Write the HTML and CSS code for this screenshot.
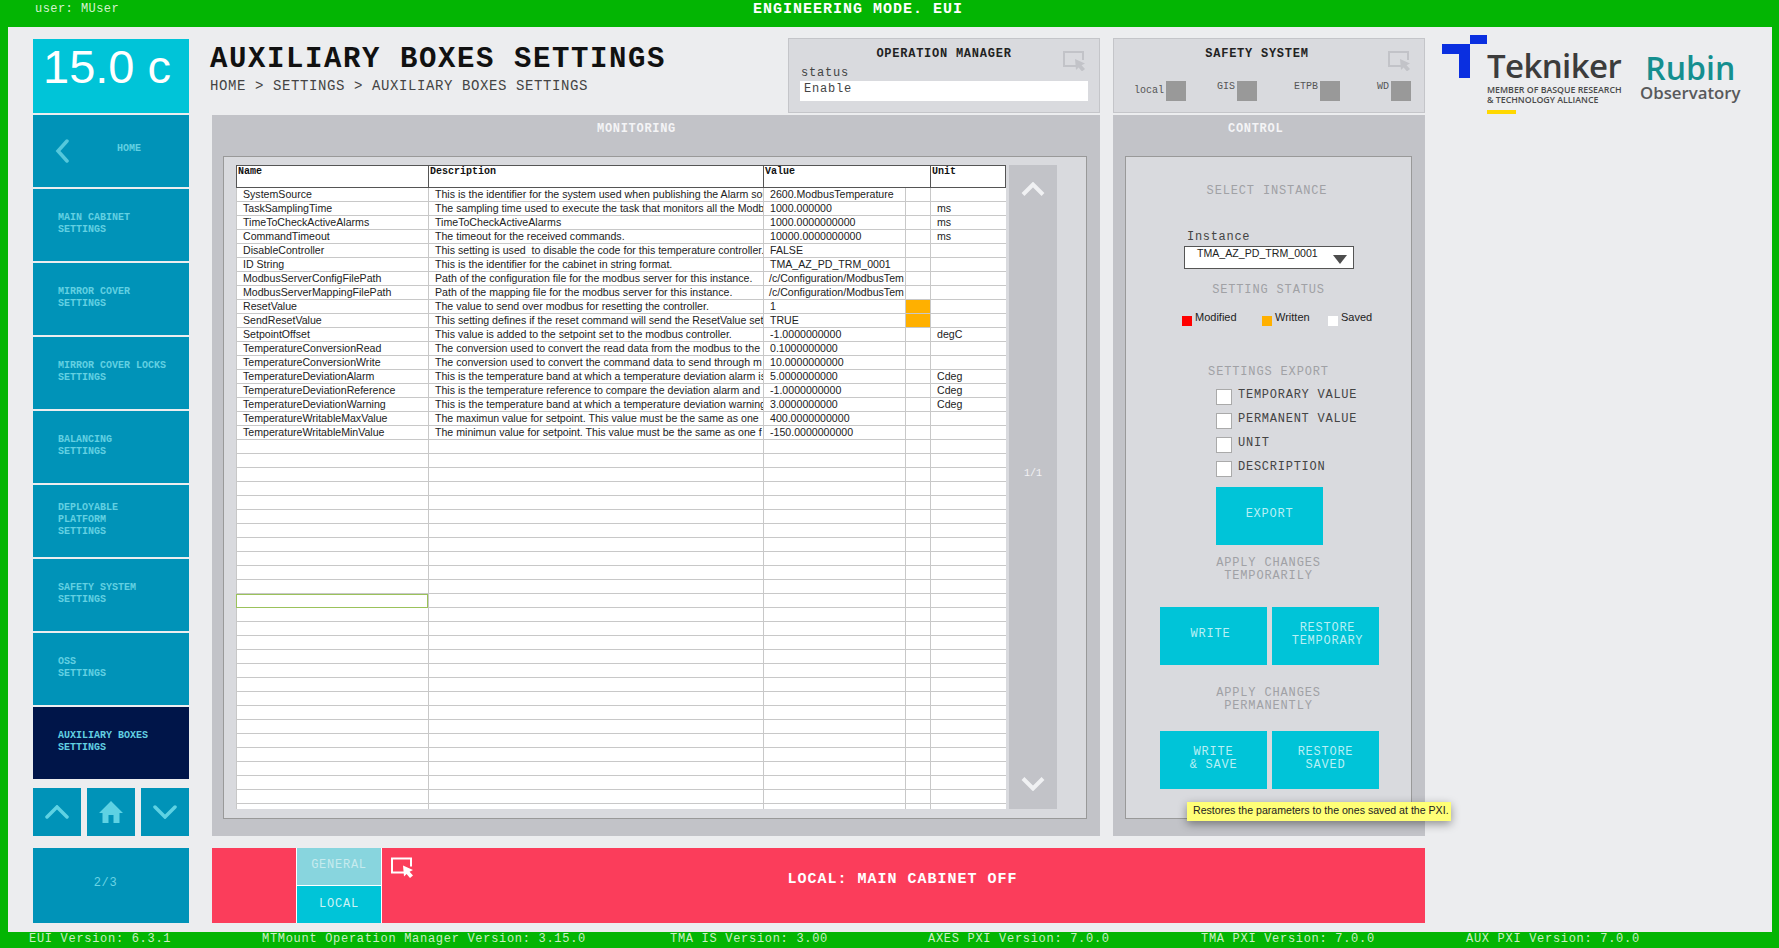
FILE: index.html
```html
<!DOCTYPE html>
<html lang="en">
<head>
	<meta charset="utf-8">
	<title>Auxiliary Boxes Settings</title>
	<link rel="stylesheet" href="styles.css">
</head>
<body>

<svg class="defs">
	<symbol id="pick" viewBox="0 0 24 20">
		<path d="M16 15H1V1H20V9" fill="none" stroke="currentColor" stroke-width="2"/>
		<path d="M12 8L13 19L15.6 16.5L19 20.5L22 18L18.6 14.2L22 12.6Z" fill="currentColor"/>
	</symbol>
</svg>

<div class="topbar">
	<span class="user">user: MUser</span>
	<span class="mode">ENGINEERING MODE. EUI</span>
</div>

<div class="main">

	<div class="leftcol">
		<div class="temp">15.0 c</div>
		<div class="nav">
			<div class="navitem navhome">
				<svg class="back" width="14" height="24" viewBox="0 0 14 24"><path d="M12 2L3 12L12 22" fill="none" stroke="currentColor" stroke-width="3.5" stroke-linecap="round"/></svg>
				<span>HOME</span>
			</div>
			<div class="navitem">MAIN CABINET<br>SETTINGS</div>
			<div class="navitem">MIRROR COVER<br>SETTINGS</div>
			<div class="navitem">MIRROR COVER LOCKS<br>SETTINGS</div>
			<div class="navitem">BALANCING<br>SETTINGS</div>
			<div class="navitem">DEPLOYABLE<br>PLATFORM<br>SETTINGS</div>
			<div class="navitem">SAFETY SYSTEM<br>SETTINGS</div>
			<div class="navitem">OSS<br>SETTINGS</div>
			<div class="navitem active">AUXILIARY BOXES<br>SETTINGS</div>
		</div>
		<div class="pager">
			<div class="pagerbtn"><svg width="24" height="14" viewBox="0 0 24 14"><path d="M2 12L12 2L22 12" fill="none" stroke="currentColor" stroke-width="3.5" stroke-linecap="round"/></svg></div>
			<div class="pagerbtn"><svg width="24" height="22" viewBox="0 0 24 22"><path d="M12 0L24 12H20.500V22H14.500V14H9.500V22H3.500V12H0Z" fill="currentColor"/></svg></div>
			<div class="pagerbtn"><svg width="24" height="14" viewBox="0 0 24 14"><path d="M2 2L12 12L22 2" fill="none" stroke="currentColor" stroke-width="3.5" stroke-linecap="round"/></svg></div>
		</div>
		<div class="pagenum">2/3</div>
	</div>

	<div class="content">

		<div class="head">
			<div class="titleblock">
				<h1>AUXILIARY BOXES SETTINGS</h1>
				<div class="crumb">HOME &gt; SETTINGS &gt; AUXILIARY BOXES SETTINGS</div>
			</div>
			<div class="headpanel opmanager">
				<svg class="pick"><use href="#pick"/></svg>
				<div class="headtitle">OPERATION MANAGER</div>
				<div class="statuslabel">status</div>
				<div class="statusvalue">Enable</div>
			</div>
		</div>

		<div class="headpanel safety">
			<svg class="pick"><use href="#pick"/></svg>
			<div class="headtitle">SAFETY SYSTEM</div>
			<div class="lights">
				<div class="light lowlabel">local<i></i></div>
				<div class="light">GIS<i></i></div>
				<div class="light">ETPB<i></i></div>
				<div class="light">WD<i></i></div>
			</div>
		</div>

		<div class="panel monitor">
			<div class="paneltitle">MONITORING</div>
			<div class="inner tablearea">
				<div class="tablewrap">
					<table class="settings">
						<colgroup><col class="c1"><col class="c2"><col class="c3"><col class="c4"><col class="c5"></colgroup>
						<thead>
							<tr><th>Name</th><th>Description</th><th colspan="2">Value</th><th>Unit</th></tr>
						</thead>
						<tbody>
							<tr><td>SystemSource</td><td>This is the identifier for the system used when publishing the Alarm sou</td><td>2600.ModbusTemperature</td><td></td><td></td></tr>
							<tr><td>TaskSamplingTime</td><td>The sampling time used to execute the task that monitors all the Modb</td><td>1000.000000</td><td></td><td>ms</td></tr>
							<tr><td>TimeToCheckActiveAlarms</td><td>TimeToCheckActiveAlarms</td><td>1000.0000000000</td><td></td><td>ms</td></tr>
							<tr><td>CommandTimeout</td><td>The timeout for the received commands.</td><td>10000.0000000000</td><td></td><td>ms</td></tr>
							<tr><td>DisableController</td><td>This setting is used &nbsp;to disable the code for this temperature controller.</td><td>FALSE</td><td></td><td></td></tr>
							<tr><td>ID String</td><td>This is the identifier for the cabinet in string format.</td><td>TMA_AZ_PD_TRM_0001</td><td></td><td></td></tr>
							<tr><td>ModbusServerConfigFilePath</td><td>Path of the configuration file for the modbus server for this instance.</td><td class="tight">/c/Configuration/ModbusTem</td><td></td><td></td></tr>
							<tr><td>ModbusServerMappingFilePath</td><td>Path of the mapping file for the modbus server for this instance.</td><td class="tight">/c/Configuration/ModbusTem</td><td></td><td></td></tr>
							<tr><td>ResetValue</td><td>The value to send over modbus for resetting the controller.</td><td>1</td><td class="written"></td><td></td></tr>
							<tr><td>SendResetValue</td><td>This setting defines if the reset command will send the ResetValue set</td><td>TRUE</td><td class="written"></td><td></td></tr>
							<tr><td>SetpointOffset</td><td>This value is added to the setpoint set to the modbus controller.</td><td>-1.0000000000</td><td></td><td>degC</td></tr>
							<tr><td>TemperatureConversionRead</td><td>The conversion used to convert the read data from the modbus to the</td><td>0.1000000000</td><td></td><td></td></tr>
							<tr><td>TemperatureConversionWrite</td><td>The conversion used to convert the command data to send through m</td><td>10.0000000000</td><td></td><td></td></tr>
							<tr><td>TemperatureDeviationAlarm</td><td>This is the temperature band at which a temperature deviation alarm is</td><td>5.0000000000</td><td></td><td>Cdeg</td></tr>
							<tr><td>TemperatureDeviationReference</td><td>This is the temperature reference to compare the deviation alarm and</td><td>-1.0000000000</td><td></td><td>Cdeg</td></tr>
							<tr><td>TemperatureDeviationWarning</td><td>This is the temperature band at which a temperature deviation warning</td><td>3.0000000000</td><td></td><td>Cdeg</td></tr>
							<tr><td>TemperatureWritableMaxValue</td><td>The maximun value for setpoint. This value must be the same as one</td><td>400.0000000000</td><td></td><td></td></tr>
							<tr><td>TemperatureWritableMinValue</td><td>The minimun value for setpoint. This value must be the same as one f</td><td>-150.0000000000</td><td></td><td></td></tr>
							<tr><td></td><td></td><td></td><td></td><td></td></tr>
							<tr><td></td><td></td><td></td><td></td><td></td></tr>
							<tr><td></td><td></td><td></td><td></td><td></td></tr>
							<tr><td></td><td></td><td></td><td></td><td></td></tr>
							<tr><td></td><td></td><td></td><td></td><td></td></tr>
							<tr><td></td><td></td><td></td><td></td><td></td></tr>
							<tr><td></td><td></td><td></td><td></td><td></td></tr>
							<tr><td></td><td></td><td></td><td></td><td></td></tr>
							<tr><td></td><td></td><td></td><td></td><td></td></tr>
							<tr><td></td><td></td><td></td><td></td><td></td></tr>
							<tr><td></td><td></td><td></td><td></td><td></td></tr>
							<tr><td class="selected"></td><td></td><td></td><td></td><td></td></tr>
							<tr><td></td><td></td><td></td><td></td><td></td></tr>
							<tr><td></td><td></td><td></td><td></td><td></td></tr>
							<tr><td></td><td></td><td></td><td></td><td></td></tr>
							<tr><td></td><td></td><td></td><td></td><td></td></tr>
							<tr><td></td><td></td><td></td><td></td><td></td></tr>
							<tr><td></td><td></td><td></td><td></td><td></td></tr>
							<tr><td></td><td></td><td></td><td></td><td></td></tr>
							<tr><td></td><td></td><td></td><td></td><td></td></tr>
							<tr><td></td><td></td><td></td><td></td><td></td></tr>
							<tr><td></td><td></td><td></td><td></td><td></td></tr>
							<tr><td></td><td></td><td></td><td></td><td></td></tr>
							<tr><td></td><td></td><td></td><td></td><td></td></tr>
							<tr><td></td><td></td><td></td><td></td><td></td></tr>
							<tr><td></td><td></td><td></td><td></td><td></td></tr>
							<tr><td></td><td></td><td></td><td></td><td></td></tr>
						</tbody>
					</table>
				</div>
				<div class="scroller">
					<svg width="24" height="14" viewBox="0 0 24 14"><path d="M2 12.500L12 2.500L22 12.500" fill="none" stroke="currentColor" stroke-width="4"/></svg>
					<span class="scrollpage">1/1</span>
					<svg width="24" height="14" viewBox="0 0 24 14"><path d="M2 1.500L12 11.500L22 1.500" fill="none" stroke="currentColor" stroke-width="4"/></svg>
				</div>
			</div>
		</div>

		<div class="panel control">
			<div class="paneltitle">CONTROL</div>
			<div class="inner controlarea">
				<div class="ctltitle selecttitle">SELECT INSTANCE</div>
				<div class="instancelabel">Instance</div>
				<div class="dropdown">
					<span>TMA_AZ_PD_TRM_0001</span>
					<svg width="14" height="9" viewBox="0 0 14 9"><path d="M0 0H14L7 9Z" fill="#4d4d4d"/></svg>
				</div>
				<div class="ctltitle statustitle">SETTING STATUS</div>
				<div class="legend">
					<div class="legenditem w80"><i class="red"></i>Modified</div>
					<div class="legenditem w66"><i class="orange"></i>Written</div>
					<div class="legenditem"><i class="white"></i>Saved</div>
				</div>
				<div class="ctltitle exporttitle">SETTINGS EXPORT</div>
				<div class="checks">
					<div class="check"><i></i>TEMPORARY VALUE</div>
					<div class="check"><i></i>PERMANENT VALUE</div>
					<div class="check"><i></i>UNIT</div>
					<div class="check"><i></i>DESCRIPTION</div>
				</div>
				<div class="btn exportbtn">EXPORT</div>
				<div class="ctltitle applytemp">APPLY CHANGES<br>TEMPORARILY</div>
				<div class="btnrow temprow">
					<div class="btn btnwrite">WRITE</div>
					<div class="btn btntemp">RESTORE<br>TEMPORARY</div>
				</div>
				<div class="ctltitle applyperm">APPLY CHANGES<br>PERMANENTLY</div>
				<div class="btnrow permrow">
					<div class="btn">WRITE<br>&amp; SAVE</div>
					<div class="btn">RESTORE<br>SAVED</div>
				</div>
			</div>
			<div class="tooltip">Restores the parameters to the ones saved at the PXI.</div>
		</div>

		<div class="statusbar">
			<div class="redcell"></div>
			<div class="tabs">
				<div class="tab general">GENERAL</div>
				<div class="tab local">LOCAL</div>
			</div>
			<div class="alarm">
				<svg class="alarmpick"><use href="#pick"/></svg>
				LOCAL: MAIN CABINET OFF
			</div>
		</div>

	</div>

	<div class="logos">
		<svg class="tlogo" width="45" height="43" viewBox="0 0 45 43"><path d="M28 0H45V9H28V43H17V19H0V9H28Z" fill="#0a2fe0"/></svg>
		<div class="tekniker">
			<div class="tekname">Tekniker</div>
			<div class="tekline">MEMBER OF BASQUE RESEARCH<br>&amp; TECHNOLOGY ALLIANCE</div>
			<div class="tekbar"></div>
		</div>
		<div class="rubin">
			<div class="rubinname">Rubin</div>
			<div class="rubinsub">Observatory</div>
		</div>
	</div>

</div>

<div class="footer">
	<span>EUI Version: 6.3.1</span>
	<span>MTMount Operation Manager Version: 3.15.0</span>
	<span>TMA IS Version: 3.00</span>
	<span>AXES PXI Version: 7.0.0</span>
	<span>TMA PXI Version: 7.0.0</span>
	<span>AUX PXI Version: 7.0.0</span>
</div>

</body>
</html>
```
FILE: styles.css
```css
html, body {
	margin: 0;
	padding: 0;
}
body {
	width: 1779px;
	height: 948px;
	overflow: hidden;
	background-color: #03b503;
	font-family: "Liberation Mono", monospace;
	font-size: 12px;
}
.defs {
	display: none;
}
i {
	display: block;
}

/* top and bottom green bars */
.topbar {
	height: 27px;
	position: relative;
	line-height: 19px;
}
.user {
	margin-left: 35px;
	color: #d5f2cf;
	font-size: 12px;
	letter-spacing: .45px;
}
.mode {
	position: absolute;
	left: 753px;
	top: 0;
	color: #fff;
	font-size: 15px;
	font-weight: bold;
	letter-spacing: 1px;
	line-height: 19px;
}
.footer {
	height: 16px;
	padding-left: 29px;
	display: grid;
	grid-template-columns: 233px 408px 258px 273px 265px 1fr;
	color: #c9f0c4;
	font-size: 12px;
	letter-spacing: .7px;
	line-height: 15px;
}

.main {
	box-sizing: border-box;
	width: 1764px;
	height: 905px;
	margin-left: 8px;
	padding: 11px 0 9px 25px;
	background-color: #ecedef;
	display: flex;
}

/* left column */
.leftcol {
	width: 156px;
	margin-right: 23px;
}
.temp {
	height: 74px;
	margin-top: 1px;
	background-color: #00c4d8;
	color: #fff;
	font-family: "Liberation Sans", sans-serif;
	font-size: 47px;
	line-height: 55px;
	padding-left: 10px;
	box-sizing: border-box;
}
.nav {
	margin-top: 2px;
	display: flex;
	flex-direction: column;
	gap: 2px;
}
.navitem {
	box-sizing: border-box;
	height: 72px;
	padding: 0 0 2px 25px;
	background-color: #0093b8;
	color: #62d0e2;
	font-size: 10px;
	line-height: 12px;
	font-weight: bold;
	display: flex;
	flex-direction: column;
	justify-content: center;
}
.navhome {
	flex-direction: row;
	align-items: center;
	justify-content: flex-start;
	padding: 0 0 0 22px;
}
.navhome span {
	margin-left: 48px;
	margin-bottom: 4px;
}
.back {
	color: #55c8dc;
}
.active {
	background-color: #001549;
}
.pager {
	margin-top: 9px;
	display: flex;
	gap: 6px;
}
.pagerbtn {
	width: 48px;
	height: 48px;
	background-color: #0093b8;
	color: #5ed2e3;
	display: flex;
	align-items: center;
	justify-content: center;
}
.pagenum {
	height: 75px;
	margin-top: 12px;
	background-color: #0093b8;
	color: #6bd3e4;
	font-size: 12px;
	letter-spacing: .7px;
	text-align: center;
	line-height: 70px;
	padding-right: 11px;
	box-sizing: border-box;
}

/* middle grid */
.content {
	width: 1213px;
	display: grid;
	grid-template-columns: 888px 312px;
	grid-template-rows: 75px 723px 75px;
	column-gap: 13px;
	row-gap: 0;
}
.head {
	display: flex;
	justify-content: space-between;
}
.titleblock {
	margin-left: -2px;
}
h1 {
	margin: 8px 0 0 0;
	font-size: 29px;
	line-height: 28px;
	letter-spacing: 1.6px;
	color: #111;
}
.crumb {
	margin-top: 4px;
	font-size: 14px;
	line-height: 16px;
	letter-spacing: .6px;
	color: #444;
}
.headpanel {
	box-sizing: border-box;
	width: 312px;
	height: 75px;
	background-color: #d9dade;
	border: 1px solid #c4c5c9;
	position: relative;
}
.pick {
	position: absolute;
	right: 12px;
	top: 12px;
	width: 24px;
	height: 20px;
	color: #c2c3c8;
}
.headtitle {
	margin-top: 9px;
	text-align: center;
	font-size: 12px;
	line-height: 13px;
	font-weight: bold;
	letter-spacing: .75px;
	color: #222;
}
.safety .headtitle {
	padding-right: 24px;
}
.statuslabel {
	margin: 6px 0 0 12px;
	line-height: 13px;
	letter-spacing: .8px;
	color: #444;
}
.statusvalue {
	margin: 1px 11px 0 11px;
	height: 20px;
	background-color: #fff;
	color: #444;
	padding-left: 4px;
	line-height: 16px;
	letter-spacing: .8px;
}
.lights {
	margin-top: 20px;
	display: grid;
	grid-template-columns: 72px 71px 83px 71px;
}
.light {
	display: flex;
	justify-content: flex-end;
	font-size: 10px;
	line-height: 12px;
	color: #555;
	gap: 2px;
}
.light i {
	width: 20px;
	height: 20px;
	background-color: #999;
}
.lowlabel {
	line-height: 20px;
}

/* grey panels */
.panel {
	background-color: #c2c3c8;
	position: relative;
	margin-top: 2px;
	height: 721px;
}
.paneltitle {
	padding-top: 7px;
	height: 36px;
	box-sizing: border-box;
	line-height: 14px;
	color: #f4f4f6;
	font-size: 12px;
	font-weight: bold;
	letter-spacing: .7px;
}
.monitor .paneltitle {
	padding-left: 385px;
}
.control .paneltitle {
	padding-left: 115px;
}
.inner {
	box-sizing: border-box;
	height: 663px;
	margin: 5px 13px 0 12px;
	background-color: #d9dade;
	border: 1px solid #999;
}
.monitor .inner {
	margin-left: 11px;
}
.tablearea {
	display: flex;
	gap: 3px;
	padding: 8px 0 9px 12px;
}
.tablewrap {
	width: 770px;
	overflow: hidden;
	background-color: #fff;
}
.settings {
	width: 770px;
	table-layout: fixed;
	border-collapse: separate;
	border-spacing: 0;
	font-family: "Liberation Sans", sans-serif;
	font-size: 10.6px;
	color: #222;
}
.c1 { width: 192px; }
.c2 { width: 335px; }
.c3 { width: 142px; }
.c4 { width: 25px; }
.c5 { width: 76px; }
.settings th {
	height: 23px;
	box-sizing: border-box;
	padding: 0 0 0 1px;
	border-top: 1px solid #555;
	border-bottom: 1px solid #555;
	border-left: 1px solid #555;
	font-family: "Liberation Mono", monospace;
	font-size: 10px;
	line-height: 11px;
	color: #111;
	text-align: left;
	vertical-align: top;
}
.settings th:last-child {
	border-right: 1px solid #555;
}
.settings td {
	box-sizing: border-box;
	height: 14px;
	padding: 0 0 0 6px;
	border-bottom: 1px solid #c8c8c8;
	border-left: 1px solid #c8c8c8;
	line-height: 12px;
	vertical-align: top;
	white-space: nowrap;
	overflow: hidden;
}
.settings td.tight {
	padding-left: 5px;
}
.settings td.written {
	background-color: #ffb000;
}
.settings td.selected {
	border: 1px solid #9bc25b;
}
.scroller {
	width: 48px;
	background-color: #c2c3c8;
	color: #f0f1f3;
	display: flex;
	flex-direction: column;
	align-items: center;
	justify-content: space-between;
	padding: 17px 0 18px 0;
	box-sizing: border-box;
}
.scrollpage {
	font-size: 10px;
	color: #f2f2f4;
	margin-bottom: 26px;
}

/* control panel */
.ctltitle {
	text-align: center;
	font-size: 12px;
	line-height: 13px;
	letter-spacing: .85px;
	color: #a0a1a5;
}
.selecttitle { margin-top: 28px; padding-right: 3px; }
.statustitle { margin-top: 15px; }
.exporttitle { margin-top: 40px; }
.applytemp { margin-top: 12px; }
.applyperm { margin-top: 22px; }
.instancelabel {
	margin: 33px 0 2px 61px;
	line-height: 13px;
	letter-spacing: .7px;
	color: #444;
}
.dropdown {
	box-sizing: border-box;
	width: 170px;
	height: 23px;
	margin-left: 58px;
	padding-left: 12px;
	background-color: #fff;
	border: 1px solid #555;
	font-family: "Liberation Sans", sans-serif;
	font-size: 10.6px;
	line-height: 12px;
	color: #222;
	display: flex;
	justify-content: space-between;
}
.dropdown svg {
	margin: 8px 6px 0 0;
}
.legend {
	margin: 14px 0 0 56px;
	display: flex;
	font-family: "Liberation Sans", sans-serif;
	font-size: 11px;
	line-height: 12px;
	color: #222;
}
.legenditem {
	display: flex;
	gap: 3px;
}
.legenditem i {
	width: 10px;
	height: 10px;
	margin-top: 5px;
}
.w80 { width: 80px; }
.w66 { width: 66px; }
.red { background-color: #f00; }
.orange { background-color: #ffb000; }
.white { background-color: #fff; }
.checks {
	margin: 10px 0 0 90px;
	display: flex;
	flex-direction: column;
	gap: 8px;
}
.check {
	display: flex;
	gap: 6px;
	height: 16px;
	line-height: 13px;
	letter-spacing: .75px;
	color: #444;
}
.check i {
	box-sizing: border-box;
	width: 16px;
	height: 16px;
	background-color: #fff;
	border: 1px solid #aaa;
}
.btn {
	box-sizing: border-box;
	width: 107px;
	height: 58px;
	padding-bottom: 3px;
	background-color: #00c4d8;
	color: #b8f0f5;
	font-size: 12px;
	line-height: 13px;
	letter-spacing: .75px;
	text-align: center;
	display: flex;
	align-items: center;
	justify-content: center;
}
.btnwrite {
	padding-right: 6px;
}
.btntemp {
	padding-left: 4px;
}
.exportbtn {
	margin: 10px 0 0 90px;
}
.btnrow {
	margin-left: 34px;
	display: flex;
	gap: 5px;
}
.temprow { margin-top: 24px; }
.permrow { margin-top: 18px; }
.tooltip {
	position: absolute;
	left: 74px;
	top: 687px;
	width: 264px;
	height: 19px;
	box-sizing: border-box;
	padding-left: 6px;
	background-color: #ffff77;
	box-shadow: 0 3px 10px rgba(0, 0, 0, .4);
	font-family: "Liberation Sans", sans-serif;
	font-size: 10.6px;
	line-height: 17px;
	color: #222;
	white-space: nowrap;
}

/* status bar */
.statusbar {
	grid-column: 1 / 3;
	margin-top: 12px;
	height: 75px;
	background-color: #fb3d5b;
	display: flex;
}
.redcell {
	width: 84px;
}
.tabs {
	width: 84px;
	display: flex;
	flex-direction: column;
	gap: 1px;
	background-color: #fff;
	border-left: 1px solid #fff;
	border-right: 1px solid #fff;
}
.tab {
	text-align: center;
	font-size: 12px;
	letter-spacing: .75px;
}
.general {
	height: 37px;
	background-color: #88d5de;
	color: #c7ebee;
	line-height: 34px;
}
.local {
	flex: 1;
	background-color: #00c4d8;
	color: #cdf3f6;
	line-height: 36px;
}
.alarm {
	flex: 1;
	position: relative;
	text-align: center;
	color: #fff;
	font-size: 15px;
	font-weight: bold;
	letter-spacing: 1px;
	line-height: 63px;
	padding-right: 2px;
}
.alarmpick {
	position: absolute;
	left: 9px;
	top: 9px;
	width: 24px;
	height: 21px;
	color: #fff;
}

/* logos */
.logos {
	margin: -3px 0 0 17px;
	display: flex;
	font-family: "Open Sans", sans-serif;
	height: 80px;
}
.tlogo {
	flex: none;
}
.tekniker {
	width: 140px;
	padding-top: 15px;
}
.tekname {
	font-size: 33px;
	font-weight: 600;
	line-height: 32px;
	color: #3c3c3c;
	letter-spacing: -.6px;
}
.tekline {
	margin-top: 3px;
	font-size: 8.8px;
	line-height: 10px;
	font-weight: 600;
	color: #4a4a4a;
	white-space: nowrap;
}
.tekbar {
	width: 29px;
	height: 4px;
	margin-top: 5px;
	background-color: #ffd800;
}
.rubin {
	margin-left: 13px;
	padding-top: 19px;
	text-align: center;
}
.rubinname {
	font-size: 32px;
	line-height: 28px;
	font-weight: 600;
	color: #158f8f;
}
.rubinsub {
	font-size: 16.8px;
	line-height: 22px;
	font-weight: 600;
	color: #58595b;
}
```
